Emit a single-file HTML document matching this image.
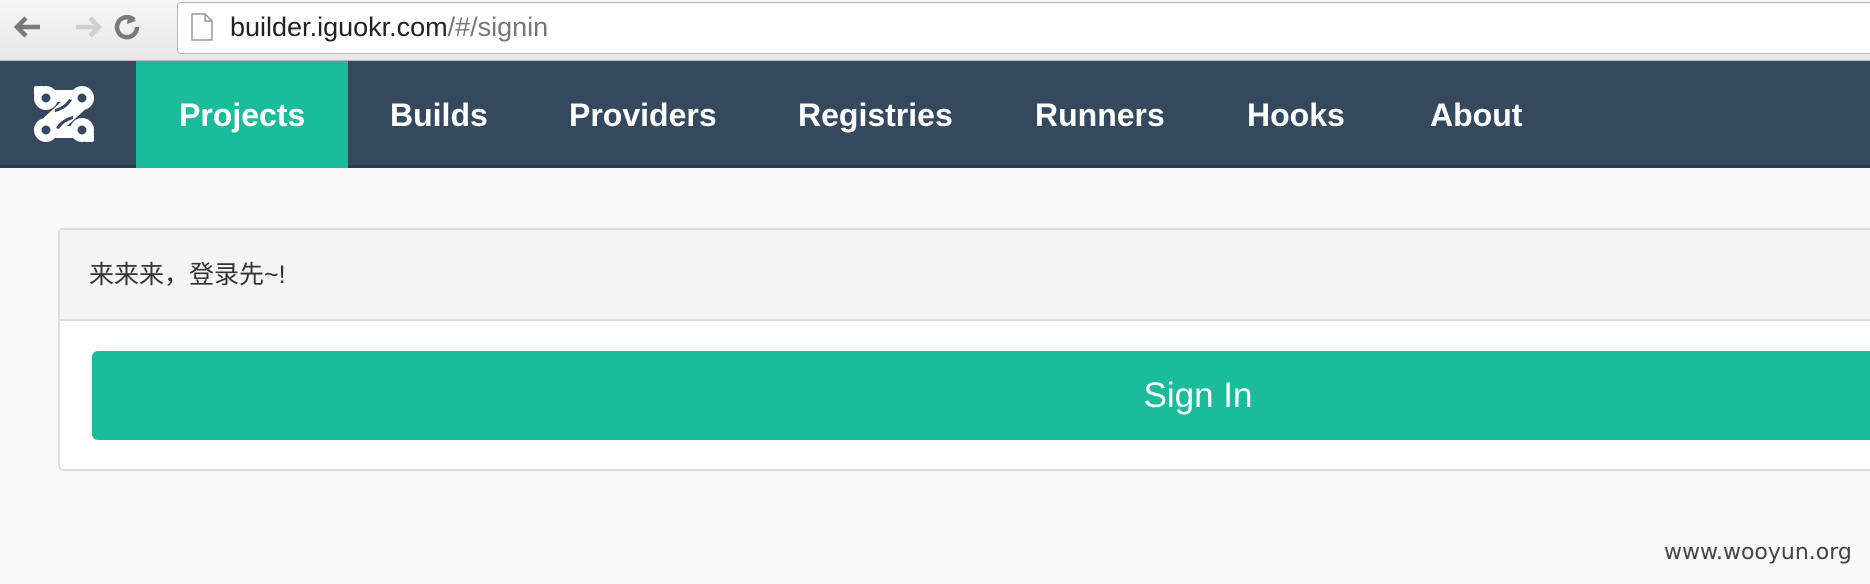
<!DOCTYPE html>
<html><head><meta charset="utf-8"><style>
*{margin:0;padding:0;box-sizing:border-box}
body{width:1870px;height:584px;overflow:hidden;background:#f9f9f9;font-family:"Liberation Sans","Noto Sans CJK SC",sans-serif;position:relative}
.tb{position:absolute;left:0;top:0;width:1870px;height:61px;background:linear-gradient(#f6f6f6,#e8e8e8);border-bottom:1px solid #b8b8b8}
.addr{position:absolute;left:177px;top:2px;width:1720px;height:52px;background:#fff;border:1px solid #b5b5b5;border-radius:4px}
.url{position:absolute;left:230px;top:9px;font-size:27px;color:#222;line-height:36px}
.url span{color:#777}
.nav{position:absolute;left:0;top:61px;width:1870px;height:107px;background:#34495e;border-bottom:3px solid #2c3e50}
.nav .it{position:absolute;top:0;height:104px;line-height:108px;color:#fff;font-weight:bold;font-size:32px}
.act{position:absolute;left:136px;top:0;width:212px;height:107px;background:#1abc9c}
.panel{position:absolute;left:58px;top:228px;width:1900px;height:243px;background:#fff;border:2px solid #ddd;border-radius:5px}
.ph{height:91px;background:#f4f4f4;border-bottom:2px solid #ddd;font-size:25px;color:#333;line-height:90px;padding-left:29px}
.btn{position:absolute;left:32px;top:121px;width:1900px;height:89px;background:#1abc9c;border-radius:6px}
.btn span{position:absolute;left:1106px;top:0;line-height:89px;font-size:35px;color:#fff;width:200px;margin-left:-100px;text-align:center}
.wm{position:absolute;left:1664px;top:540px;font-size:22px;color:#444;font-family:"DejaVu Sans",sans-serif}
</style></head><body>
<div class="tb">
<svg style="position:absolute;left:10px;top:12px" width="140" height="30" viewBox="0 0 140 30">
<path d="M30 15H8M16 6l-9 9 9 9" stroke="#7a7a7a" stroke-width="4.5" fill="none"/>
<path d="M66 15h22M80 6l9 9-9 9" stroke="#d0d0d0" stroke-width="4.5" fill="none"/>
<path d="M141 15a10 10 0 1 1-3-7" transform="translate(-14 0)" stroke="#7a7a7a" stroke-width="4.5" fill="none"/>
<path d="M118 3l8 6-9 3z" fill="#7a7a7a"/>
</svg>
<div class="addr"></div>
<svg style="position:absolute;left:191px;top:13px" width="22" height="28" viewBox="0 0 22 28"><path d="M1 1h13l7 7v19H1z" fill="#fff" stroke="#999" stroke-width="1.5"/><path d="M14 1v7h7" fill="none" stroke="#999" stroke-width="1.5"/></svg>
<div class="url">builder.iguokr.com<span>/#/signin</span></div>
</div>
<div class="nav">
<svg style="position:absolute;left:33px;top:24px" width="62" height="58" viewBox="0 0 62 58">
<g fill="#fff">
<circle cx="13" cy="13" r="12"/><rect x="1" y="1" width="10" height="10" rx="2"/>
<circle cx="49" cy="13" r="12"/>
<circle cx="13" cy="45" r="12"/>
<circle cx="49" cy="45" r="12"/><rect x="51" y="47" width="10" height="10" rx="2"/>
<path d="M13 5h36v12H13z"/>
<path d="M13 41h36v12H13z"/>
<path d="M42 4L58 19 20 54 4 39z"/>
</g>
<g fill="#34495e">
<circle cx="13" cy="13" r="4.5"/><circle cx="49" cy="13" r="4.5"/><circle cx="13" cy="45" r="4.5"/><circle cx="49" cy="45" r="4.5"/>
<path d="M22 24q10-3 14-10l3 1q-5 9-17 12z"/>
<path d="M40 34q-10 3-14 10l-3-1q5-9 17-12z"/>
</g>
</svg>
<div class="act"></div>
<div class="it" style="left:179px">Projects</div>
<div class="it" style="left:390px">Builds</div>
<div class="it" style="left:569px">Providers</div>
<div class="it" style="left:798px">Registries</div>
<div class="it" style="left:1035px">Runners</div>
<div class="it" style="left:1247px">Hooks</div>
<div class="it" style="left:1430px">About</div>
</div>
<div class="panel">
<div class="ph">来来来，登录先~!</div>
<div class="btn"><span>Sign In</span></div>
</div>
<div class="wm">www.wooyun.org</div>
</body></html>
